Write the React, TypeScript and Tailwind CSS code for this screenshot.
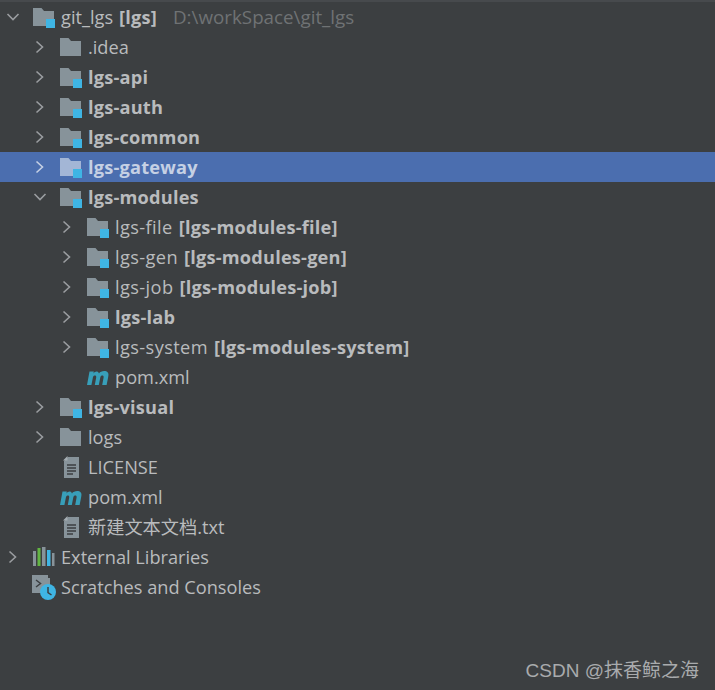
import React from "react";

type Icon = "module" | "folder" | "maven" | "text" | "libs" | "scratch";

type Row = {
  depth: 0 | 1 | 2;
  arrow?: "right" | "down";
  icon: Icon;
  name: string;
  bold?: boolean;
  suffix?: string;
  path?: string;
  selected?: boolean;
};

const rows: Row[] = [
  { depth: 0, arrow: "down", icon: "module", name: "git_lgs", suffix: "[lgs]", path: "D:\\workSpace\\git_lgs" },
  { depth: 1, arrow: "right", icon: "folder", name: ".idea" },
  { depth: 1, arrow: "right", icon: "module", name: "lgs-api", bold: true },
  { depth: 1, arrow: "right", icon: "module", name: "lgs-auth", bold: true },
  { depth: 1, arrow: "right", icon: "module", name: "lgs-common", bold: true },
  { depth: 1, arrow: "right", icon: "module", name: "lgs-gateway", bold: true, selected: true },
  { depth: 1, arrow: "down", icon: "module", name: "lgs-modules", bold: true },
  { depth: 2, arrow: "right", icon: "module", name: "lgs-file", suffix: "[lgs-modules-file]" },
  { depth: 2, arrow: "right", icon: "module", name: "lgs-gen", suffix: "[lgs-modules-gen]" },
  { depth: 2, arrow: "right", icon: "module", name: "lgs-job", suffix: "[lgs-modules-job]" },
  { depth: 2, arrow: "right", icon: "module", name: "lgs-lab", bold: true },
  { depth: 2, arrow: "right", icon: "module", name: "lgs-system", suffix: "[lgs-modules-system]" },
  { depth: 2, icon: "maven", name: "pom.xml" },
  { depth: 1, arrow: "right", icon: "module", name: "lgs-visual", bold: true },
  { depth: 1, arrow: "right", icon: "folder", name: "logs" },
  { depth: 1, icon: "text", name: "LICENSE" },
  { depth: 1, icon: "maven", name: "pom.xml" },
  { depth: 1, icon: "text", name: "新建文本文档.txt" },
  { depth: 0, arrow: "right", icon: "libs", name: "External Libraries" },
  { depth: 0, icon: "scratch", name: "Scratches and Consoles" },
];

const depthClass = ["pl-[6px]", "pl-[33px]", "pl-[60px]"];

function Arrow({ dir, selected }: { dir?: "right" | "down"; selected?: boolean }) {
  const color = selected ? "#c5d0e4" : "#9a9da0";
  return (
    <span className="flex h-[16px] w-[14px] shrink-0 items-center justify-center">
      {dir && (
        <svg width="14" height="16" viewBox="0 0 14 16" fill="none" stroke={color} strokeWidth="1.6">
          {dir === "right" ? <path d="M3.5 2.5 L9.5 8 L3.5 13.5" /> : <path d="M1.5 5 L7 10.5 L12.5 5" />}
        </svg>
      )}
    </span>
  );
}

function TreeIcon({ icon, selected }: { icon: Icon; selected?: boolean }) {
  const folder = selected ? "#a3b6d6" : "#87939a";
  if (icon === "module" || icon === "folder") {
    return (
      <svg width="24" height="24" viewBox="0 0 24 24">
        <path d="M1 3 H9.5 L12 6 H22 V21 H1 Z" fill={folder} />
        {icon === "module" && <rect x="14" y="14" width="9" height="9" fill="#3fb5e4" />}
      </svg>
    );
  }
  if (icon === "maven") {
    return (
      <svg width="24" height="24" viewBox="0 0 24 24">
        <path
          d="M1 20 L3.5 6.5 H7.8 L7.5 8.4 C9 6.4 11.8 5.6 13 8.4 C14.6 6.2 19.6 5 21.8 7.6 C22.8 9 22.5 10.6 22.1 12.4 L20.6 20 H16.2 L17.6 12.4 C18 10.2 15.4 9.8 14.4 12 L12.8 20 H8.8 L10.2 12.4 C10.6 10.2 8 9.8 7 12 L5.4 20 Z"
          fill="#389fb9"
        />
      </svg>
    );
  }
  if (icon === "text") {
    return (
      <svg width="24" height="24" viewBox="0 0 24 24">
        <path d="M9 2 H20 V23 H5 V6 Z" fill="#87939a" />
        <path d="M4 5.5 L8.5 1 V5.5 Z" fill="#a5adb2" />
        <path d="M8 10 H17 M8 13 H17 M8 16 H17 M8 19 H14" stroke="#3c3f41" strokeWidth="1.3" />
      </svg>
    );
  }
  if (icon === "libs") {
    return (
      <svg width="24" height="24" viewBox="0 0 24 24">
        <rect x="1" y="6" width="3" height="15" fill="#87939a" />
        <rect x="5.5" y="3" width="3" height="18" fill="#62b543" />
        <rect x="10" y="2" width="3.5" height="19" fill="#87939a" />
        <rect x="15" y="5" width="3.5" height="16" fill="#3fb5e4" />
        <rect x="20" y="8" width="2.5" height="13" fill="#87939a" />
      </svg>
    );
  }
  return (
    <svg width="24" height="24" viewBox="0 0 24 24" className="overflow-visible">
      <path d="M0 0 H16 V3 H18 V12 H10 V18 H0 Z" fill="#87939a" />
      <path d="M4 5 L8.5 8.5 L4 12" fill="none" stroke="#3c3f41" strokeWidth="1.5" />
      <circle cx="16" cy="17" r="8" fill="#3fb5e4" />
      <path d="M16 12 V17.5 L19.5 20" fill="none" stroke="#3c3f41" strokeWidth="1.5" />
    </svg>
  );
}

function TreeRow({ row }: { row: Row }) {
  const depth = depthClass[row.depth];
  return (
    <div className={`flex h-[30px] items-center ${depth} ${row.selected ? "bg-[#4b6eaf]" : ""}`}>
      <Arrow dir={row.arrow} selected={row.selected} />
      <span className="ml-[12px] flex h-[24px] w-[24px] shrink-0 items-center justify-center">
        <TreeIcon icon={row.icon} selected={row.selected} />
      </span>
      <span
        className={`ml-[5px] whitespace-nowrap ${row.bold ? "font-bold tracking-[0.2px]" : "font-normal"} ${
          row.selected ? "text-[#c5d0e4]" : "text-[#b9bbbd]"
        }`}
      >
        <span className={row.depth === 2 && row.suffix ? "tracking-[0.4px]" : ""}>{row.name}</span>
        {row.suffix && <span className="ml-[6px] font-bold tracking-[0.2px]">{row.suffix}</span>}
        {row.path && <span className="ml-[16px] text-[18.8px] text-[#6f7274]">{row.path}</span>}
      </span>
    </div>
  );
}

export default function App() {
  return (
    <div
      className="relative h-[690px] w-[715px] overflow-hidden border-t-2 border-[#474a4d] bg-[#3c3f41] text-[18.2px] leading-[24px]"
      style={{ fontFamily: '"Open Sans", "Noto Sans CJK SC", sans-serif' }}
    >
      {rows.map((row, i) => (
        <TreeRow key={i} row={row} />
      ))}
      <div
        className="absolute bottom-[7px] right-[16px] text-[19px] leading-[24px] text-[#a9abad]"
        style={{ fontFamily: '"Liberation Sans", "Noto Sans CJK SC", sans-serif' }}
      >
        CSDN @抹香鲸之海
      </div>
    </div>
  );
}
